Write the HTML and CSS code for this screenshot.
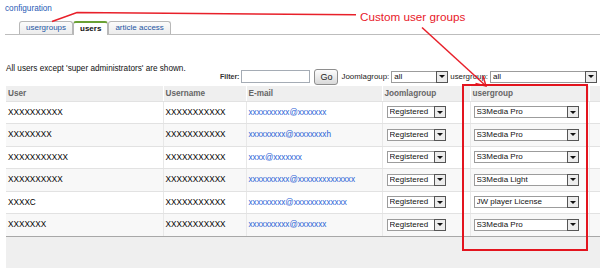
FILE: index.html
```html
<!DOCTYPE html>
<html lang="en">
<head>
  <meta charset="UTF-8">
  <title>Users - configuration</title>
  <link rel="stylesheet" href="styles.css">
</head>
<body>
  <div class="page">
    <a class="crumb" href="#">configuration</a>

    <div class="tabs">
      <span class="tab">usergroups</span>
      <span class="tab active">users</span>
      <span class="tab">article access</span>
    </div>

    <div class="toolbar">
      <p class="note">All users except 'super administrators' are shown.</p>
      <div class="filters">
        <label class="strong">Filter:</label>
        <input type="text" class="search">
        <button class="go">Go</button>
        <label>Joomlagroup:</label>
        <span class="pick pick-filter-j"><select><option>all</option></select><i class="drop"></i></span>
        <label>usergroup:</label>
        <span class="pick pick-filter-u"><select><option>all</option></select><i class="drop"></i></span>
      </div>
    </div>

    <table class="grid">
      <colgroup>
        <col style="width:157px">
        <col style="width:83px">
        <col style="width:136px">
        <col style="width:88px">
        <col style="width:119px">
        <col style="width:11px">
      </colgroup>
      <thead>
        <tr>
          <th>User</th>
          <th>Username</th>
          <th>E-mail</th>
          <th>Joomlagroup</th>
          <th>usergroup</th>
          <th></th>
        </tr>
      </thead>
      <tbody>
        <tr>
          <td>XXXXXXXXXX</td>
          <td>XXXXXXXXXXX</td>
          <td><a class="mail" href="#">xxxxxxxxxx@xxxxxxx</a></td>
          <td><span class="pick pick-role"><select><option>Registered</option></select><i class="drop"></i></span></td>
          <td><span class="pick pick-group"><select><option>S3Media Pro</option></select><i class="drop"></i></span></td>
          <td></td>
        </tr>
        <tr>
          <td>XXXXXXXX</td>
          <td>XXXXXXXXXXX</td>
          <td><a class="mail" href="#">xxxxxxxxx@xxxxxxxxh</a></td>
          <td><span class="pick pick-role"><select><option>Registered</option></select><i class="drop"></i></span></td>
          <td><span class="pick pick-group"><select><option>S3Media Pro</option></select><i class="drop"></i></span></td>
          <td></td>
        </tr>
        <tr>
          <td>XXXXXXXXXXX</td>
          <td>XXXXXXXXXXX</td>
          <td><a class="mail" href="#">xxxx@xxxxxxx</a></td>
          <td><span class="pick pick-role"><select><option>Registered</option></select><i class="drop"></i></span></td>
          <td><span class="pick pick-group"><select><option>S3Media Pro</option></select><i class="drop"></i></span></td>
          <td></td>
        </tr>
        <tr>
          <td>XXXXXXXXXX</td>
          <td>XXXXXXXXXXX</td>
          <td><a class="mail" href="#">xxxxxxxxxx@xxxxxxxxxxxxxx</a></td>
          <td><span class="pick pick-role"><select><option>Registered</option></select><i class="drop"></i></span></td>
          <td><span class="pick pick-group"><select><option>S3Media Light</option></select><i class="drop"></i></span></td>
          <td></td>
        </tr>
        <tr>
          <td>XXXXC</td>
          <td>XXXXXXXXXXX</td>
          <td><a class="mail" href="#">xxxxxxxxx@xxxxxxxxxxxxx</a></td>
          <td><span class="pick pick-role"><select><option>Registered</option></select><i class="drop"></i></span></td>
          <td><span class="pick pick-group"><select><option>JW player License</option></select><i class="drop"></i></span></td>
          <td></td>
        </tr>
        <tr>
          <td>XXXXXXX</td>
          <td>XXXXXXXXXXX</td>
          <td><a class="mail" href="#">xxxxxxxxxx@xxxxxxx</a></td>
          <td><span class="pick pick-role"><select><option>Registered</option></select><i class="drop"></i></span></td>
          <td><span class="pick pick-group"><select><option>S3Media Pro</option></select><i class="drop"></i></span></td>
          <td></td>
        </tr>
      </tbody>
    </table>
    <div class="footer"></div>
  </div>

  <!-- annotation layer drawn over the screenshot -->
  <svg class="marks" width="600" height="268" viewBox="0 0 600 268">
    <path d="M52 21.5 L77 12.5 L356 14.8" />
    <path d="M422 27.5 L486 86" />
    <path d="M475.5 83.5 L486 86 L483 76" />
  </svg>
  <div class="mark-box"></div>
  <div class="mark-label">Custom user groups</div>
</body>
</html>
```

FILE: styles.css
```css
* {
  box-sizing: border-box;
}
body {
  margin: 0;
  width: 600px;
  height: 268px;
  overflow: hidden;
  position: relative;
  font-family: 'Liberation Sans', Arial, sans-serif;
  font-size: 8.2px;
  color: #222;
  background: #fff;
}
.page {
  padding: 4px 0 0 5px;
}
.crumb {
  display: block;
  height: 10px;
  line-height: 10px;
  color: #1f5bb5;
  text-decoration: none;
}

/* tabs */
.tabs {
  display: flex;
  align-items: flex-end;
  margin-top: 7px;
  padding-left: 14px;
  border-bottom: 1px solid #bdbdbd;
}
.tab {
  height: 13px;
  line-height: 12px;
  padding: 0 6px;
  font-size: 8px;
  color: #2456a4;
  border: 1px solid #b8b8b8;
  border-bottom: 0;
  border-radius: 3px 3px 0 0;
  background: linear-gradient(#fbfbfb, #ececec);
}
.tab.active {
  height: 14px;
  margin-bottom: -1px;
  color: #111;
  font-weight: bold;
  background: #fff;
  border-top: 2px solid #6aa134;
}

/* note + filters */
.toolbar {
  display: flex;
  justify-content: space-between;
  align-items: center;
  height: 17px;
  margin-top: 33px;
  padding: 0 3px 0 1px;
}
.note {
  align-self: flex-start;
  margin: -4px 0 0;
  line-height: 10px;
  color: #111;
}
.filters {
  display: flex;
  align-items: center;
  gap: 2px;
  font-size: 7.9px;
}
.filters label {
  color: #222;
}
.filters label.strong {
  font-size: 7px;
  font-weight: bold;
  color: #333;
}
.search {
  width: 69px;
  height: 13px;
  padding: 0;
  margin-right: 1px;
  border: 1px solid #a5acb5;
}
.go {
  width: 24px;
  height: 16px;
  padding: 0;
  margin: 0 1px;
  font-family: inherit;
  font-size: 9px;
  color: #222;
  border: 1px solid #8e8e8e;
  border-radius: 3px;
  background: linear-gradient(#fdfdfd, #d9d9d9);
}

/* select boxes */
.pick {
  display: inline-flex;
  height: 12px;
  border: 1px solid #9c9c9c;
  background: #fff;
  vertical-align: middle;
}
.pick select {
  -webkit-appearance: none;
  appearance: none;
  flex: 1;
  min-width: 0;
  height: 100%;
  padding: 0 0 0 2px;
  border: 0;
  outline: none;
  background: transparent;
  font-family: inherit;
  font-size: 8px;
  line-height: 10px;
  color: #111;
}
.drop {
  display: flex;
  align-items: center;
  justify-content: center;
  width: 12px;
  margin: -1px -1px -1px 0;
  border: 1px solid #555;
  background: #ececec;
}
.drop::after {
  content: "";
  border-left: 3px solid transparent;
  border-right: 3px solid transparent;
  border-top: 3px solid #111;
}
.pick-filter-j {
  width: 57px;
}
.pick-filter-u {
  width: 107px;
}
.pick-role {
  width: 59px;
  margin-left: 2px;
}
.pick-group {
  width: 105px;
  margin-left: 1px;
}

/* grid */
.grid {
  width: 594px;
  margin: 1px 0 0 1px;
  border-collapse: collapse;
  table-layout: fixed;
}
.grid th {
  height: 15px;
  padding: 0 2px;
  text-align: left;
  font-weight: bold;
  color: #666;
  background: #efefef;
  border-right: 1px solid #fff;
  border-bottom: 1px solid #e2e2e2;
}
.grid td {
  height: 22.5px;
  padding: 0 2px;
  color: #000;
  white-space: nowrap;
  overflow: hidden;
  border-right: 1px solid #e8e8e8;
  border-bottom: 1px solid #e2e2e2;
}
.grid tbody tr:nth-child(even) td {
  background: #f8f8f8;
}
.grid tbody tr:last-child td {
  border-bottom: 1px solid #a8a8a8;
}
.mail {
  color: #2a62d6;
  text-decoration: none;
}
.footer {
  height: 40px;
  margin-left: 1px;
  background: #efefef;
}

/* annotations */
.marks {
  position: absolute;
  left: 0;
  top: 0;
  pointer-events: none;
}
.marks path {
  fill: none;
  stroke: #e8202a;
  stroke-width: 1.5;
}
.mark-box {
  position: absolute;
  left: 462px;
  top: 84px;
  width: 126px;
  height: 167px;
  border: 2px solid #e3141e;
}
.mark-label {
  position: absolute;
  left: 360px;
  top: 11px;
  font-size: 11.7px;
  line-height: 1;
  color: #e8202a;
}
```
